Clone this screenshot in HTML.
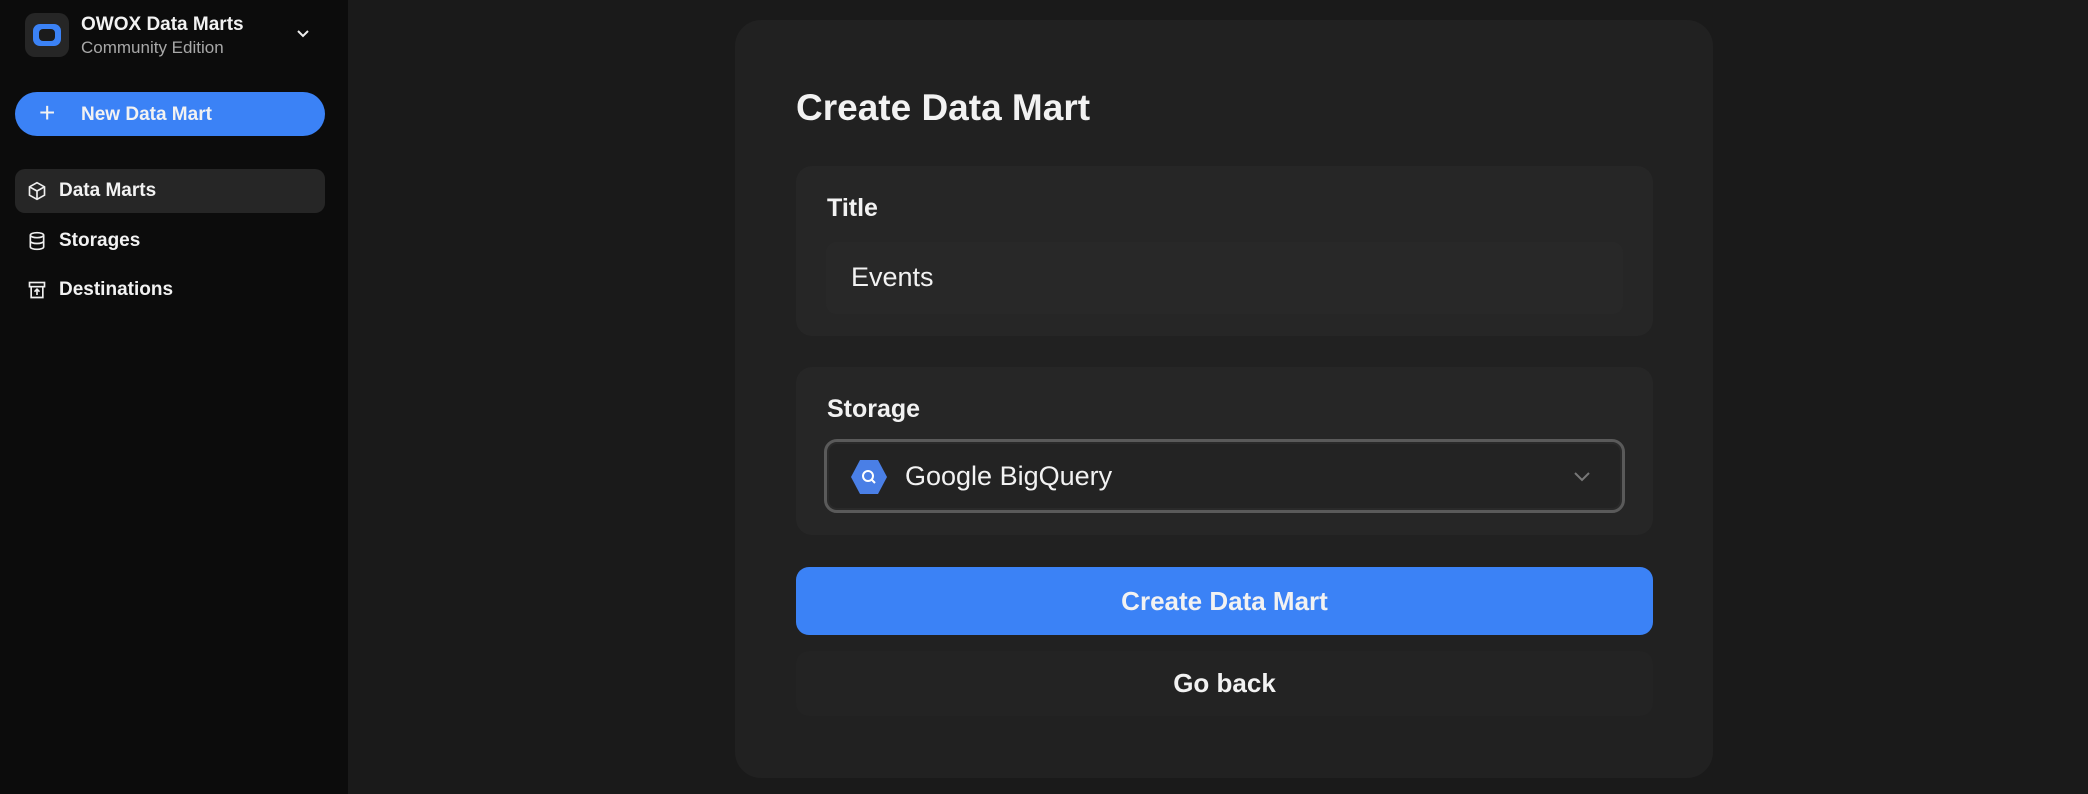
<!DOCTYPE html>
<html><head><meta charset="utf-8"><style>
*{box-sizing:border-box;margin:0;padding:0}
body{width:2088px;height:794px;background:#1a1a1a;font-family:"Liberation Sans",sans-serif;color:#f2f2f2;position:relative;overflow:hidden}
.sb{position:absolute;left:0;top:0;width:348px;height:794px;background:#0c0c0c}
.abs{position:absolute}
.logo{left:25px;top:13px;width:44px;height:44px;border-radius:10px;background:#262626}
.logo i{position:absolute;left:8px;top:11px;width:28px;height:22px;border-radius:7px;background:#3b82f6}
.logo i:after{content:"";position:absolute;left:6px;top:5px;width:16px;height:12px;border-radius:4px;background:#1b1b1b}
.nb{left:15px;top:92px;width:310px;height:44px;border-radius:22px;background:#3b82f6;font-size:19px;font-weight:bold}
.nav{left:15px;width:310px;height:44px;border-radius:10px;font-size:19px;font-weight:bold;display:flex;align-items:center;padding-left:44px}
.nav svg{position:absolute;left:12px;top:12px}
.card{left:735px;top:20px;width:978px;height:758px;border-radius:26px;background:#212121}
.sec{left:796px;width:857px;border-radius:16px;background:#262626}
.lbl{font-size:25px;font-weight:bold;position:absolute;left:31px}
.btn{left:796px;width:857px;border-radius:13px;display:flex;align-items:center;justify-content:center;font-size:26px;font-weight:bold}
</style></head><body>
<div class="sb">
<div class="abs logo"><i></i></div>
<div class="abs" style="left:81px;top:14px;font-size:19px;font-weight:bold">OWOX Data Marts</div>
<div class="abs" style="left:81px;top:38px;font-size:17px;color:#a8a8a8">Community Edition</div>
<svg class="abs" style="left:295px;top:28px" width="16" height="12" viewBox="0 0 16 12"><path d="M3 3l5 5 5-5" stroke="#eee" stroke-width="2" fill="none"/></svg>
<div class="abs nb"><span style="position:absolute;left:24px;top:5px;font-size:28px;font-weight:normal">+</span><span style="position:absolute;left:66px;top:12px">New Data Mart</span></div>
<div class="abs nav" style="top:169px;background:#262626"><svg width="20" height="20" viewBox="0 0 24 24" fill="none" stroke="#eee" stroke-width="2"><path d="M12 2l9 5v10l-9 5-9-5V7z"/><path d="M3 7l9 5 9-5M12 12v10"/></svg>Data Marts</div>
<div class="abs nav" style="top:219px"><svg width="20" height="20" viewBox="0 0 24 24" fill="none" stroke="#eee" stroke-width="2"><ellipse cx="12" cy="5" rx="8" ry="3"/><path d="M4 5v14c0 1.7 3.6 3 8 3s8-1.3 8-3V5M4 12c0 1.7 3.6 3 8 3s8-1.3 8-3"/></svg>Storages</div>
<div class="abs nav" style="top:268px"><svg width="20" height="20" viewBox="0 0 24 24" fill="none" stroke="#eee" stroke-width="2"><rect x="3" y="3" width="18" height="5"/><path d="M5 8v13h14V8M12 18v-7M9 14l3-3 3 3"/></svg>Destinations</div>
</div>
<div class="abs card"></div>
<div class="abs" style="left:796px;top:87px;font-size:37px;font-weight:bold">Create Data Mart</div>
<div class="abs sec" style="top:166px;height:170px">
<div class="lbl" style="top:28px">Title</div>
<div class="abs" style="left:30px;top:76px;width:797px;height:72px;border-radius:10px;background:#282828"></div>
<div class="abs" style="left:55px;top:96px;font-size:27px">Events</div>
</div>
<div class="abs sec" style="top:367px;height:168px">
<div class="lbl" style="top:28px">Storage</div>
<div class="abs" style="left:28px;top:72px;width:801px;height:74px;border-radius:13px;border:3px solid #5a5a5a;background:#232323;box-shadow:inset 0 0 0 2px #2a2a2a"></div>
<svg class="abs" style="left:54px;top:92px" width="38" height="36" viewBox="0 0 38 36"><path d="M10 1h18l9 17-9 17H10L1 18z" fill="#4a7fe6"/><circle cx="18" cy="17" r="5" fill="none" stroke="#fff" stroke-width="2"/><path d="M21 20l4 4" stroke="#fff" stroke-width="2"/></svg>
<div class="abs" style="left:109px;top:94px;font-size:27px">Google BigQuery</div>
<svg class="abs" style="left:776px;top:103px" width="20" height="14" viewBox="0 0 20 14"><path d="M3 3l7 7 7-7" stroke="#777" stroke-width="2" fill="none"/></svg>
</div>
<div class="abs btn" style="top:567px;height:68px;background:#3b82f6">Create Data Mart</div>
<div class="abs btn" style="top:651px;height:65px;background:#232323">Go back</div>
</body></html>
